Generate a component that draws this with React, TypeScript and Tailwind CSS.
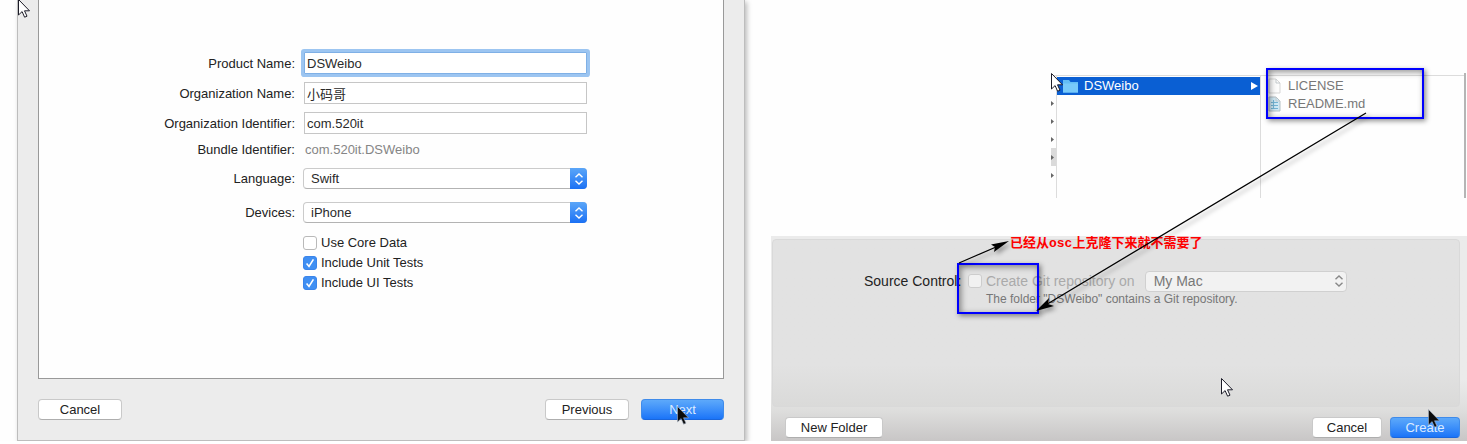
import React from "react";
import clsx from "clsx";

function Pointer({ dark = false, className }: { dark?: boolean; className: string }) {
  return (
    <svg aria-hidden="true" className={clsx("pointer-events-none absolute h-[19px] w-3", className)} viewBox="0 0 12 19">
      <path
        d="M.5.5V16l3.6-3.4 2.5 5.6 2.4-1-2.5-5.4h5z"
        fill={dark ? "#0b0b0b" : "#fff"}
        stroke={dark ? "#a8b4c4" : "#1c1c28"}
        strokeWidth={dark ? 0.6 : 1}
      />
    </svg>
  );
}

function UpDown({ className }: { className: string }) {
  return (
    <svg aria-hidden="true" viewBox="0 0 8 12" className={clsx("h-3 w-2", className)} fill="none" stroke="currentColor" strokeWidth="1.4">
      <path d="M.5 4.300 4 1l3.500 3.300M.5 7.700 4 11l3.500-3.300" />
    </svg>
  );
}

function Field({ id, label, value, focused = false }: { id: string; label: string; value: string; focused?: boolean }) {
  return (
    <div className="flex items-center gap-2">
      <label htmlFor={id} className="w-64 shrink-0 pt-0.5 text-right">
        {label}
      </label>
      <input
        id={id}
        type="text"
        defaultValue={value}
        className={clsx(
          "ml-px h-[22px] min-w-0 flex-1 border bg-white px-0.5 leading-5 text-[#2a2a2a] outline-none",
          focused ? "rounded-[1px] border-[#7fb0e6] ring-3 ring-[#9cc5f1]" : "border-[#c6c6c6]",
        )}
      />
    </div>
  );
}

function PopUp({ id, label, options }: { id: string; label: string; options: string[] }) {
  return (
    <div className="flex items-center gap-2">
      <label htmlFor={id} className="w-64 shrink-0 text-right">
        {label}
      </label>
      <div className="relative min-w-0 flex-1">
        <select
          id={id}
          className="block h-[21px] w-full appearance-none rounded border border-[#cbcbcb] border-b-[#b3b3b3] bg-white pl-[7px] text-[#2a2a2a]"
        >
          {options.map((o) => (
            <option key={o}>{o}</option>
          ))}
        </select>
        <span className="pointer-events-none absolute inset-y-0 right-0 flex w-[17px] items-center justify-center rounded-r bg-linear-to-b from-[#5ba6f8] to-[#1a70f4] text-white">
          <UpDown className="" />
        </span>
      </div>
    </div>
  );
}

function Check({ label, checked = false }: { label: string; checked?: boolean }) {
  return (
    <label className="flex h-5 items-center gap-1">
      <span className="relative flex">
        <input
          type="checkbox"
          defaultChecked={checked}
          className="peer size-[14px] appearance-none rounded-[3px] border border-[#b9b9b9] bg-white checked:border-[#3a84ea] checked:bg-[#3f8ff3]"
        />
        <svg
          aria-hidden="true"
          viewBox="0 0 14 14"
          className="pointer-events-none absolute inset-0 hidden size-[14px] peer-checked:block"
          fill="none"
          stroke="#fff"
          strokeWidth="1.6"
        >
          <path d="m3.6 7.6 2.4 2.8 4.4-7" />
        </svg>
      </span>
      {label}
    </label>
  );
}

function Button({ children, className, primary = false }: { children: React.ReactNode; className: string; primary?: boolean }) {
  return (
    <button
      type="button"
      className={clsx(
        "relative h-[21px] rounded border",
        primary
          ? "border-[#3f8bea] border-b-[#1a66dc] bg-linear-to-b from-[#5da9fa] to-[#1a74f8] text-[#dcebff]"
          : "border-[#c9c9c9] border-b-[#aeaeae] bg-white text-[#222]",
        className,
      )}
    >
      {children}
    </button>
  );
}

function ProjectOptions() {
  return (
    <section className="relative ml-[17px] self-start border-x border-b border-[#bdbdbd] bg-[#ececec] px-5 shadow-[2px_2px_5px_#00000045]">
      <Pointer className="-top-px left-0" />
      <form className="flex flex-col gap-2 border-x border-b border-[#999] bg-[#fefefe] pt-[52px] pr-[136px] pb-[85px]">
        <Field id="product" label="Product Name:" value="DSWeibo" focused />
        <Field id="org" label="Organization Name:" value="小码哥" />
        <Field id="orgid" label="Organization Identifier:" value="com.520it" />
        <div className="flex h-4 items-center gap-2">
          <span className="w-64 shrink-0 text-right">Bundle Identifier:</span>
          <output className="pl-0.5 text-[#858585]">com.520it.DSWeibo</output>
        </div>
        <div className="flex flex-col gap-[13px] pt-0.5">
          <PopUp id="language" label="Language:" options={["Swift", "Objective-C"]} />
          <PopUp id="devices" label="Devices:" options={["iPhone", "iPad", "Universal"]} />
        </div>
        <div className="ml-66 flex flex-col pt-0.5">
          <Check label="Use Core Data" />
          <Check label="Include Unit Tests" checked />
          <Check label="Include UI Tests" checked />
        </div>
      </form>
      <div className="flex gap-3 pt-5 pb-5">
        <Button className="mr-auto w-[84px]">Cancel</Button>
        <Button className="w-[84px]">Previous</Button>
        <Button className="w-[83px]" primary>
          Next
          <Pointer dark className="top-[6px] left-[35px]" />
        </Button>
      </div>
    </section>
  );
}

function FileIcon({ lines = false }: { lines?: boolean }) {
  return (
    <svg aria-hidden="true" viewBox="0 0 13 16" className="h-4 w-[13px] shrink-0">
      <path d="M1 1h7l4 4v10H1z" fill={lines ? "#cfe9f5" : "#fcfcfc"} stroke={lines ? "#b4bfc4" : "#d6d6d6"} />
      <path d="M8 1v4h4" fill="none" stroke="#c4cacd" />
      {lines && <path d="M3 6.5h7M3 9.5h7M3 12.5h7M5.5 4v9" stroke="#74b4d4" />}
    </svg>
  );
}

function FinderColumns() {
  return (
    <div className="relative mt-[73px] mr-px ml-[280px] flex h-[125px] border-r-2 border-[#b5b5b5] pt-0.5">
      <ul className="w-1.5 shrink-0 border-t border-r border-[#dcdcdc] pt-[18px]">
        {[0, 1, 2, 3, 4].map((i) => (
          <li key={i} className={clsx("flex h-[18px] items-center", i === 3 && "bg-[#dadada]")}>
            <svg aria-hidden="true" viewBox="0 0 3 5" className="h-[5px] w-[3px]">
              <path d="M0 0l3 2.500L0 5z" fill="#666" />
            </svg>
          </li>
        ))}
      </ul>
      <div className="w-[204px] shrink-0 border-t border-r border-[#dcdcdc] pt-px">
        <div className="flex h-[18px] items-center bg-[#0a5fd3] pr-0.5 pl-[5px] text-white">
          <svg aria-hidden="true" viewBox="0 0 17 14" className="mr-[5px] h-[14px] w-[17px]">
            <path d="M1 1h6l1.500 2H16v10.500H1z" fill="#63bdf5" />
            <path d="M1 4.500h15v9H1z" fill="#78cafa" />
          </svg>
          <span className="flex-1">DSWeibo</span>
          <svg aria-hidden="true" viewBox="0 0 7 8" className="h-2 w-[7px]">
            <path d="M0 0l7 4-7 4z" fill="#fff" />
          </svg>
        </div>
      </div>
      <ul className="min-w-0 flex-1 border-t border-[#dcdcdc] pt-px pl-[7px] text-[#777]">
        <li className="flex h-[18px] items-center gap-[7px]">
          <FileIcon />
          LICENSE
        </li>
        <li className="flex h-[18px] items-center gap-[7px]">
          <FileIcon lines />
          README.md
        </li>
      </ul>
      <Pointer className="top-0 left-0" />
    </div>
  );
}

function SaveSheet() {
  return (
    <div className="relative mt-[38px] bg-linear-to-b from-[#ebebeb] from-70% via-[#dededd] via-85% to-[#c8c6c6] pt-[3px]">
      <div className="mr-[7px] ml-px rounded-sm border border-[#d9d9d9] bg-linear-to-b from-[#e2e2e2] from-75% to-[#dadad9] pt-[30px] pb-[100px] pl-[91px]">
        <div className="flex h-[22px] items-center text-sm">
          <span className="w-[104px] shrink-0">Source Control:</span>
          <label className="flex shrink-0 items-center gap-1 text-[#aaa]">
            <input type="checkbox" className="size-[14px] appearance-none rounded-[3px] border border-[#cdcdcd] bg-[#f1f1f1]" />
            Create Git repository on
          </label>
          <div className="relative ml-[10px] w-[202px] shrink-0 text-[#777]">
            <select
              aria-label="Repository location"
              className="block h-[21px] w-full appearance-none rounded border border-[#d0d0d0] bg-[#f2f2f2] pl-2 leading-[19px]"
            >
              <option>My Mac</option>
            </select>
            <UpDown className="pointer-events-none absolute top-1 right-1 text-[#888]" />
          </div>
        </div>
        <p className="pl-[122px] text-xs leading-[14px] text-[#777]">The folder "DSWeibo" contains a Git repository.</p>
      </div>
      <div className="flex gap-2 pt-2.5 pr-[7px] pb-[3px] pl-[14px]">
        <Button className="mr-auto w-[98px]">New Folder</Button>
        <Button className="w-[70px]">Cancel</Button>
        <Button className="w-[70px]" primary>
          Create
          <Pointer dark className="-top-[9px] left-[37px]" />
        </Button>
      </div>
      <Pointer className="top-[142px] left-[450px]" />
    </div>
  );
}

function Annotations() {
  return (
    <div className="pointer-events-none absolute inset-0">
      <div className="absolute top-[68px] left-[495px] h-[51px] w-[158px] border-2 border-[#0000fe] shadow-[2px_2px_5px_#00000070,inset_2px_2px_6px_#00000070]" />
      <div className="absolute top-[263px] left-[186px] h-[51px] w-[82px] border-2 border-[#0000fe] shadow-[2px_2px_5px_#00000070,inset_2px_2px_6px_#00000070]" />
      <p className="absolute top-[235px] left-[239px] font-['Liberation_Mono','Noto_Sans_CJK_SC',monospace] text-[13px] leading-[18px] font-bold whitespace-nowrap text-[#fe0000]">
        已经从osc上克隆下来就不需要了
      </p>
      <svg aria-hidden="true" className="absolute top-0 left-0 h-[444px] w-[696px] drop-shadow-[3px_3px_2px_#00000055]" viewBox="0 0 696 444">
        <path d="M595 113 268 309M188 263l44-19" stroke="#000" strokeWidth="1.300" fill="none" />
        <path d="m265 311 13-13-1 6 6 2zM238 241l-18 3.500 4 2.500-1 5z" />
      </svg>
    </div>
  );
}

export default function App() {
  return (
    <main className="grid grid-cols-[745fr_696fr] gap-[26px] bg-[#fefefe] font-['Liberation_Sans','Noto_Sans_CJK_SC',sans-serif] text-[13px] leading-4 text-[#222]">
      <ProjectOptions />
      <section className="relative">
        <FinderColumns />
        <SaveSheet />
        <Annotations />
      </section>
    </main>
  );
}
